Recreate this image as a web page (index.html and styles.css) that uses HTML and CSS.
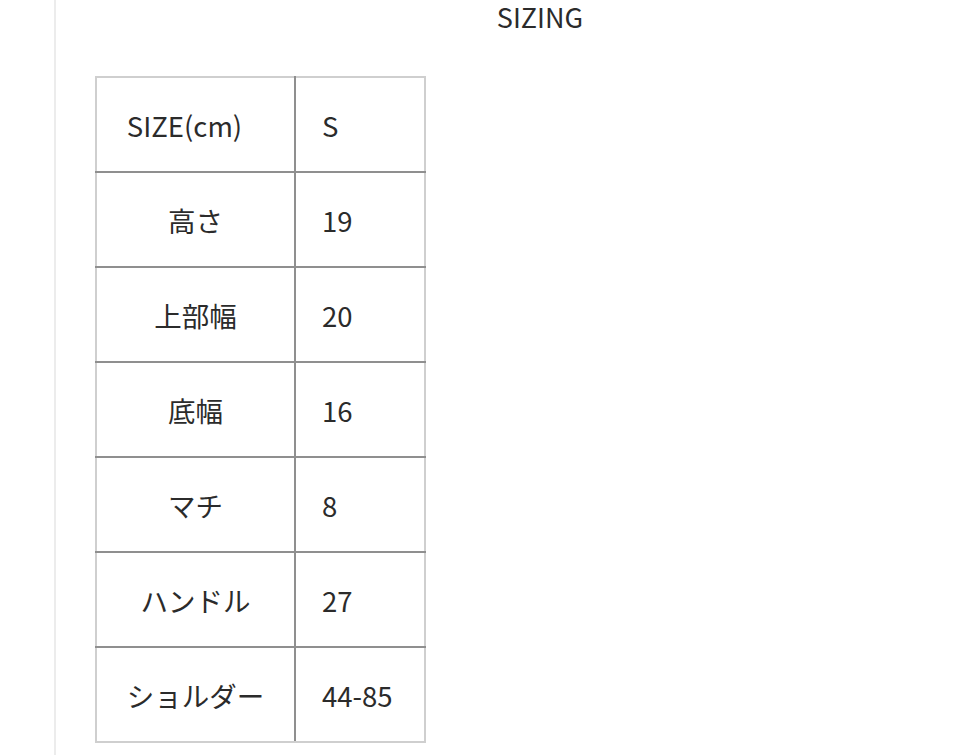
FILE: index.html
```html
<!DOCTYPE html>
<html lang="ja">
<head>
<meta charset="utf-8">
<link rel="stylesheet" href="styles.css">
</head>
<body>
<div class="page">
  <div class="content">
    <h2 class="title">SIZING</h2>
    <table class="size-table">
      <tr><td class="label lat">SIZE(cm)</td><td class="val">S</td></tr>
      <tr><td class="label">高さ</td><td class="val">19</td></tr>
      <tr><td class="label">上部幅</td><td class="val">20</td></tr>
      <tr><td class="label">底幅</td><td class="val">16</td></tr>
      <tr><td class="label">マチ</td><td class="val">8</td></tr>
      <tr><td class="label">ハンドル</td><td class="val">27</td></tr>
      <tr><td class="label">ショルダー</td><td class="val">44-85</td></tr>
    </table>
  </div>
</div>
</body>
</html>
```
FILE: styles.css
```css
html, body {
  margin: 0;
  padding: 0;
  background: #fff;
}
body {
  font-family: "Noto Sans CJK JP", "Noto Sans", sans-serif;
  color: #2b2b2b;
}
.page {
  height: 755px;
  overflow: hidden;
}
.content {
  margin-left: 54px;
  height: 755px;
  border-left: 2px solid #ececec;
}
.title {
  margin: 0;
  padding: 1px 0 0 71px;
  font-weight: 400;
  font-size: 27px;
  line-height: 31px;
  text-align: center;
}
.size-table {
  margin-top: 44px;
  margin-left: 39px;
  border-collapse: collapse;
  border: 2px solid #cfcfcf;
}
.size-table td {
  height: 93px;
  padding: 0;
  font-size: 27.5px;
  border: 2px solid #8f8f8f;
  vertical-align: middle;
}
.size-table tr:first-child td { border-top-color: #cfcfcf; }
.size-table tr:last-child td { border-bottom-color: #cfcfcf; }
.size-table td.label {
  width: 197px;
  text-align: center;
  border-left-color: #cfcfcf;
}
.size-table td.lat {
  padding-right: 22px;
  width: 175px;
}
.size-table td.val {
  width: 102px;
  padding-left: 26px;
  text-align: left;
  border-right-color: #cfcfcf;
}
```
